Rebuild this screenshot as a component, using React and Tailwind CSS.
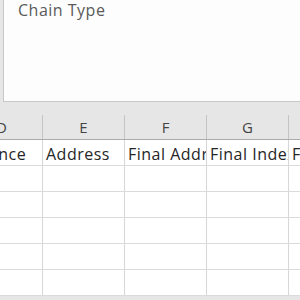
const cols = [
  { letter: "D", title: "Balance" },
  { letter: "E", title: "Address" },
  { letter: "F", title: "Final Address" },
  { letter: "G", title: "Final Index" },
  { letter: "H", title: "Fee" },
];

const rows = [1, 2, 3, 4, 5, 6];

export default function App() {
  return (
    <div className="w-[300px] h-[300px] overflow-hidden bg-[#e6e6e6] font-['Open_Sans',sans-serif]">
      {/* dialog panel */}
      <div className="ml-[3px] h-[102px] bg-[#fdfdfd] border-l border-b border-[#c8c8c8]">
        <div className="pl-[14px] text-[16px] leading-[20px] tracking-[0.5px] text-[#5a5a5a]">Chain Type</div>
      </div>

      {/* sheet */}
      <div className="mt-[13px] -ml-[39px] flex flex-col">
        <div className="flex h-[25px] border-b border-[#ababab]">
          {cols.map((c) => (
            <div
              key={c.letter}
              className="w-[82px] shrink-0 flex items-center justify-center border-r border-[#c4c4c4] text-[15px] text-[#444]"
            >
              {c.letter}
            </div>
          ))}
        </div>
        <div className="bg-white">
          {rows.map((r) => (
            <div key={r} className="flex h-[26px] border-b border-[#dadada]">
              {cols.map((c) => (
                <div
                  key={c.letter}
                  className="w-[82px] shrink-0 flex items-end overflow-hidden whitespace-nowrap border-r border-[#d6d6d6] px-[3px] pb-[1px] text-[16px] leading-[20px] tracking-[0.5px] text-[#262626]"
                >
                  {r === 1 ? c.title : ""}
                </div>
              ))}
            </div>
          ))}
        </div>
      </div>
    </div>
  );
}
